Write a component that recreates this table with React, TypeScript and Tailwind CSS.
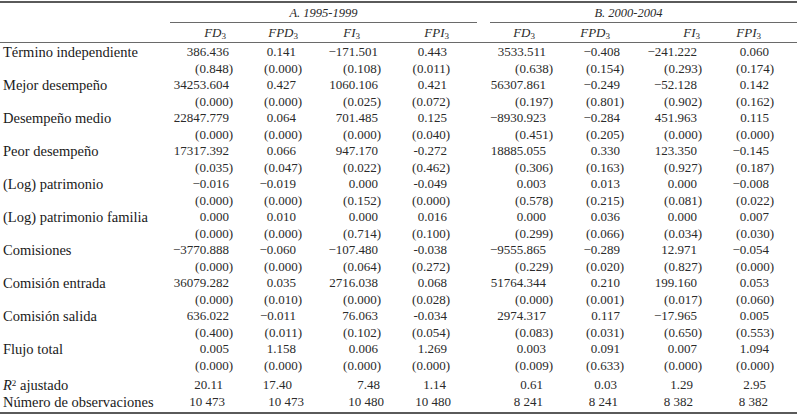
const cols = 'grid grid-cols-[160px_78px_70px_77px_91px_86px_74px_76px_85px]';

const estPr = ['pr-[9px]', 'pr-[12px]', 'pr-[7px]', 'pr-[29px]', 'pr-[16px]', 'pr-[16px]', 'pr-[15px]', 'pr-[28px]'];
const pPr = ['pr-[5px]', 'pr-[6px]', 'pr-[4px]', 'pr-[26px]', 'pr-[9px]', 'pr-[12px]', 'pr-[10px]', 'pr-[23px]'];
const r2Pr = ['pr-[15px]', 'pr-[16px]', 'pr-[5px]', 'pr-[30px]', 'pr-[19px]', 'pr-[19px]', 'pr-[19px]', 'pr-[31px]'];
const nPr = ['pr-[13px]', 'pr-[4px]', 'pr-[1px]', 'pr-[25px]', 'pr-[19px]', 'pr-[18px]', 'pr-[19px]', 'pr-[29px]'];
const hdrPr = ['pr-[12px]', 'pr-[10px]', 'pr-[25px]', 'pr-[27px]', 'pr-[27px]', 'pr-[26px]', 'pr-[12px]', 'pr-[36px]'];

const headers: [string, string][] = [
  ['FD', '3'],
  ['FPD', '3'],
  ['FI', '3'],
  ['FPI', '3'],
  ['FD', '3'],
  ['FPD', '3'],
  ['FI', '3'],
  ['FPI', '3'],
];

type Row = { label: string; est: string[]; p: string[] };

const rows: Row[] = [
  {
    label: 'Término independiente',
    est: ['386.436', '0.141', '−171.501', '0.443', '3533.511', '−0.408', '−241.222', '0.060'],
    p: ['(0.848)', '(0.000)', '(0.108)', '(0.011)', '(0.638)', '(0.154)', '(0.293)', '(0.174)'],
  },
  {
    label: 'Mejor desempeño',
    est: ['34253.604', '0.427', '1060.106', '0.421', '56307.861', '−0.249', '−52.128', '0.142'],
    p: ['(0.000)', '(0.000)', '(0.025)', '(0.072)', '(0.197)', '(0.801)', '(0.902)', '(0.162)'],
  },
  {
    label: 'Desempeño medio',
    est: ['22847.779', '0.064', '701.485', '0.125', '−8930.923', '−0.284', '451.963', '0.115'],
    p: ['(0.000)', '(0.000)', '(0.000)', '(0.040)', '(0.451)', '(0.205)', '(0.000)', '(0.000)'],
  },
  {
    label: 'Peor desempeño',
    est: ['17317.392', '0.066', '947.170', '-0.272', '18885.055', '0.330', '123.350', '−0.145'],
    p: ['(0.035)', '(0.047)', '(0.022)', '(0.462)', '(0.306)', '(0.163)', '(0.927)', '(0.187)'],
  },
  {
    label: '(Log) patrimonio',
    est: ['−0.016', '−0.019', '0.000', '-0.049', '0.003', '0.013', '0.000', '−0.008'],
    p: ['(0.000)', '(0.000)', '(0.152)', '(0.000)', '(0.578)', '(0.215)', '(0.081)', '(0.022)'],
  },
  {
    label: '(Log) patrimonio familia',
    est: ['0.000', '0.010', '0.000', '0.016', '0.000', '0.036', '0.000', '0.007'],
    p: ['(0.000)', '(0.000)', '(0.714)', '(0.100)', '(0.299)', '(0.066)', '(0.034)', '(0.030)'],
  },
  {
    label: 'Comisiones',
    est: ['−3770.888', '−0.060', '−107.480', '-0.038', '−9555.865', '−0.289', '12.971', '−0.054'],
    p: ['(0.000)', '(0.000)', '(0.064)', '(0.272)', '(0.229)', '(0.020)', '(0.827)', '(0.000)'],
  },
  {
    label: 'Comisión entrada',
    est: ['36079.282', '0.035', '2716.038', '0.068', '51764.344', '0.210', '199.160', '0.053'],
    p: ['(0.000)', '(0.010)', '(0.000)', '(0.028)', '(0.000)', '(0.001)', '(0.017)', '(0.060)'],
  },
  {
    label: 'Comisión salida',
    est: ['636.022', '−0.011', '76.063', '-0.034', '2974.317', '0.117', '−17.965', '0.005'],
    p: ['(0.400)', '(0.011)', '(0.102)', '(0.054)', '(0.083)', '(0.031)', '(0.650)', '(0.553)'],
  },
  {
    label: 'Flujo total',
    est: ['0.005', '1.158', '0.006', '1.269', '0.003', '0.091', '0.007', '1.094'],
    p: ['(0.000)', '(0.000)', '(0.000)', '(0.000)', '(0.009)', '(0.633)', '(0.000)', '(0.000)'],
  },
];

const r2 = ['20.11', '17.40', '7.48', '1.14', '0.61', '0.03', '1.29', '2.95'];
const nObs = ['10 473', '10 473', '10 480', '10 480', '8 241', '8 241', '8 382', '8 382'];

function Line({ label, values, pad }: { label?: React.ReactNode; values: string[]; pad: string[] }) {
  return (
    <div className={`${cols} h-[16.5px] items-center leading-[16.5px]`}>
      <div className="pl-[3px] text-[14.5px] text-[#1a1a1a]">{label}</div>
      {values.map((v, i) => (
        <div key={i} className={`text-right text-[13px] ${pad[i]}`}>
          {v}
        </div>
      ))}
    </div>
  );
}

export default function App() {
  return (
    <div className="h-[415px] w-[797px] overflow-hidden bg-white font-['Liberation_Serif',serif] text-[#2a2a2a]">
      {/* filete superior */}
      <div className="mt-[1px] border-t-2 border-[#5a5a5a]" />

      {/* grupos de periodos */}
      <div className="grid h-[20px] grid-cols-[160px_317px_320px] items-end">
        <div />
        <div className="ml-[10px] border-b border-[#6a6a6a] pb-[1px] text-center text-[12.5px] italic leading-[16px]">
          A. 1995-1999
        </div>
        <div className="ml-[13px] border-b border-[#6a6a6a] pb-[1px] pr-[30px] text-center text-[12.5px] italic leading-[16px]">
          B. 2000-2004
        </div>
      </div>

      {/* encabezados de columnas */}
      <div className={`${cols} h-[20px] items-center border-b border-[#6a6a6a]`}>
        <div />
        {headers.map(([name, sub], i) => (
          <div key={i} className={`text-right text-[13px] italic ${hdrPr[i]}`}>
            {name}
            <sub className="text-[9px] not-italic">{sub}</sub>
          </div>
        ))}
      </div>

      {/* coeficientes y p-valores */}
      <div className="pt-[1px]">
        {rows.map((row) => (
          <div key={row.label}>
            <Line label={row.label} values={row.est} pad={estPr} />
            <Line values={row.p} pad={pPr} />
          </div>
        ))}
      </div>

      {/* ajuste y observaciones */}
      <div className="mt-[3px] border-b-2 border-[#5a5a5a] pb-[2px]">
        <Line
          label={
            <>
              <span className="italic">R</span>
              <sup className="text-[9px]">2</sup> ajustado
            </>
          }
          values={r2}
          pad={r2Pr}
        />
        <Line label="Número de observaciones" values={nObs} pad={nPr} />
      </div>
    </div>
  );
}
